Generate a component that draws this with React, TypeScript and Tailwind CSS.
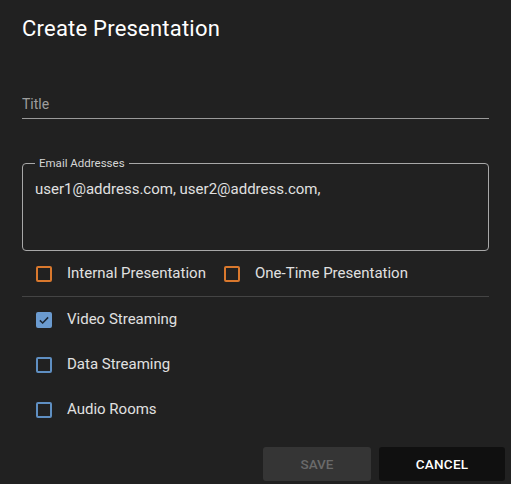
import React, { useState } from "react";

type Option = {
  id: string;
  label: string;
};

const streamOptions: Option[] = [
  { id: "video", label: "Video Streaming" },
  { id: "data", label: "Data Streaming" },
  { id: "audio", label: "Audio Rooms" },
];

function CheckBox({
  checked,
  tone,
  onToggle,
}: {
  checked: boolean;
  tone: "orange" | "blue";
  onToggle: () => void;
}) {
  const border = tone === "orange" ? "border-[#d9782d]" : "border-[#5f8fc2]";
  return (
    <button
      type="button"
      onClick={onToggle}
      className={`w-4 h-4 shrink-0 rounded-[2px] border-2 flex items-center justify-center ${border} ${
        checked ? "bg-[#6b9bd0] border-[#6b9bd0]" : "bg-transparent"
      }`}
    >
      {checked && (
        <svg viewBox="0 0 16 16" className="w-3 h-3">
          <path
            d="M2.5 8.5 L6.2 12 L13.5 4.5"
            fill="none"
            stroke="#1b2633"
            strokeWidth="2"
          />
        </svg>
      )}
    </button>
  );
}

function App() {
  const [title, setTitle] = useState("");
  const [emails, setEmails] = useState(
    "user1@address.com, user2@address.com,"
  );
  const [internal, setInternal] = useState(false);
  const [oneTime, setOneTime] = useState(false);
  const [streams, setStreams] = useState<Record<string, boolean>>({
    video: true,
    data: false,
    audio: false,
  });

  const toggleStream = (id: string) => {
    setStreams((prev) => ({ ...prev, [id]: !prev[id] }));
  };

  return (
    <div
      className="w-[511px] h-[484px] bg-[#212121] flex flex-col overflow-hidden"
      style={{ fontFamily: "Roboto, 'Liberation Sans', sans-serif" }}
    >
      <div className="px-[22px]">
        <h2 className="pt-[15px] text-[22px] leading-[28px] tracking-[0.01em] text-white">
          Create Presentation
        </h2>

        <input
          type="text"
          value={title}
          onChange={(e) => setTitle(e.target.value)}
          placeholder="Title"
          className="mt-[51px] w-full h-[25px] pb-[4px] bg-transparent border-b border-[#9a9a9a] text-[14px] leading-[20px] text-[#e0e0e0] placeholder:text-[#9e9e9e] outline-none"
        />

        <div className="relative mt-[44px] h-[88px] flex flex-col pt-[15px] pl-3 pr-3 border border-[#a8a8a8] rounded-[4px]">
          <span className="absolute -top-[8px] left-[12px] px-1 bg-[#212121] text-[11.5px] leading-[14px] text-[#d6d6d6]">
            Email Addresses
          </span>
          <textarea
            value={emails}
            onChange={(e) => setEmails(e.target.value)}
            className="flex-1 w-full p-0 bg-transparent resize-none text-[15px] leading-[20px] text-[#e0e0e0] outline-none"
          />
        </div>
      </div>

      <div className="px-[22px]">
        <div className="h-[46px] flex items-center pl-[14px] border-b border-[#444444] text-[15px] text-[#e0e0e0]">
          <label className="w-[188px] flex items-center gap-[15px]">
            <CheckBox
              checked={internal}
              tone="orange"
              onToggle={() => setInternal(!internal)}
            />
            <span>Internal Presentation</span>
          </label>
          <label className="flex items-center gap-[15px]">
            <CheckBox
              checked={oneTime}
              tone="orange"
              onToggle={() => setOneTime(!oneTime)}
            />
            <span>One-Time Presentation</span>
          </label>
        </div>

        {streamOptions.map((opt) => (
          <label
            key={opt.id}
            className="h-[45px] flex items-center gap-[15px] pl-[14px] text-[15px] text-[#e0e0e0]"
          >
            <CheckBox
              checked={streams[opt.id]}
              tone="blue"
              onToggle={() => toggleStream(opt.id)}
            />
            <span>{opt.label}</span>
          </label>
        ))}
      </div>

      <div className="mt-[15px] flex justify-end gap-[8px] pr-[6px]">
        <button
          type="button"
          disabled
          className="w-[108px] h-[34px] rounded-[3px] bg-[#353535] text-[13.5px] font-medium text-[#6a6a6a]"
        >
          SAVE
        </button>
        <button
          type="button"
          className="w-[126px] h-[34px] rounded-[3px] bg-[#101010] text-[13.5px] font-medium tracking-[0.02em] text-white"
        >
          CANCEL
        </button>
      </div>
    </div>
  );
}

export default App;
